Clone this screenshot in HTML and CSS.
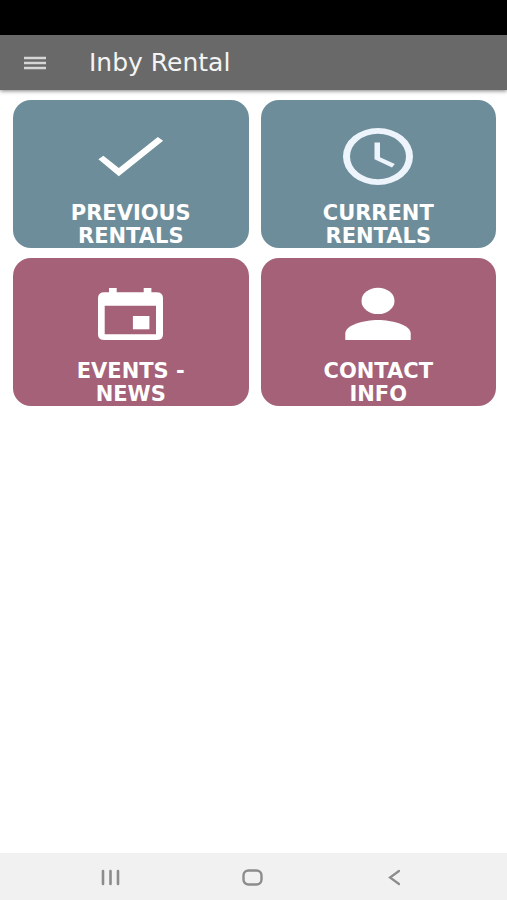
FILE: index.html
```html
<!DOCTYPE html>
<html lang="en">
<head>
    <meta charset="UTF-8">
    <meta name="viewport" content="width=device-width, initial-scale=1.0">
    <title>Inby Rental</title>
    <link rel="stylesheet" href="styles.css">
</head>
<body>
    <div class="status-bar"></div>

    <header class="toolbar">
        <button class="menu-button" type="button" aria-label="Menu">
            <svg width="24" height="14" viewBox="0 0 24 14">
                <path d="M1 2h22M1 7h22M1 12h22" stroke="#d6d6d6" stroke-width="2.4"/>
            </svg>
        </button>
        <h1>Inby Rental</h1>
    </header>

    <main class="tiles">
        <a class="tile blue" href="#previous">
            <svg class="tile-icon" viewBox="0 0 80 64">
                <path d="M7.4 35.3L12.4 31.7L27.8 44L66.8 13L72.1 16.7L27.8 52.3Z"/>
            </svg>
            <span>PREVIOUS RENTALS</span>
        </a>
        <a class="tile blue" href="#current">
            <svg class="tile-icon clock" viewBox="0 0 80 64">
                <path fill-rule="evenodd" d="M5 32.5a35 28.5 0 1 0 70 0a35 28.5 0 1 0 -70 0ZM12 32.5a28 22.7 0 1 1 56 0a28 22.7 0 1 1 -56 0Z"/>
                <path d="M36.5 18.5H42V33.3L56.8 40L54 43.6L36.5 35.3Z"/>
            </svg>
            <span>CURRENT RENTALS</span>
        </a>
        <a class="tile plum" href="#events">
            <svg class="tile-icon" viewBox="0 0 80 64">
                <path fill-rule="evenodd" d="M18 6H25.7V10.3H52.7V6H60.4V10.3H65.2Q72 10.3 72 16V52.5Q72 58 65.2 58H13.7Q7 58 7 52.5V16Q7 10.3 13.7 10.3H18ZM13.7 23.7V52.3H65V23.7Z"/>
                <path d="M41.9 34H58.4V47.3H41.9Z"/>
            </svg>
            <span>EVENTS - NEWS</span>
        </a>
        <a class="tile plum" href="#contact">
            <svg class="tile-icon" viewBox="0 0 80 64">
                <ellipse cx="40" cy="18.9" rx="16.5" ry="13.2"/>
                <path d="M7.3 58V51.5C7.3 43 26 38 40 38S72.7 43 72.7 51.5V58Z"/>
            </svg>
            <span>CONTACT INFO</span>
        </a>
    </main>

    <nav class="nav-bar" aria-label="System">
        <button type="button" aria-label="Recent apps">
            <svg width="24" height="20" viewBox="0 0 24 20">
                <path d="M3 4v13M10.5 4v13M18 4v13" stroke-width="2.6"/>
            </svg>
        </button>
        <button type="button" aria-label="Home">
            <svg width="24" height="20" viewBox="0 0 24 20">
                <rect x="1.5" y="3.5" width="18" height="14" rx="5" stroke-width="2.4"/>
            </svg>
        </button>
        <button type="button" aria-label="Back">
            <svg width="24" height="20" viewBox="0 0 24 20">
                <path d="M15 4L6 10.5L15 17" stroke-width="2.2"/>
            </svg>
        </button>
    </nav>
</body>
</html>
```

FILE: styles.css
```css
* {
    box-sizing: border-box;
}
body {
    display: flex;
    flex-direction: column;
    min-height: 100vh;
    margin: 0;
    background-color: #fff;
    font-family: "DejaVu Sans", Verdana, sans-serif;
}
button {
    display: flex;
    padding: 0;
    border: none;
    background: none;
    cursor: pointer;
}
.status-bar {
    height: 35px;
    background-color: #000;
}
.toolbar {
    display: flex;
    align-items: center;
    gap: 42px;
    height: 55px;
    padding: 0 23px;
    background-color: #696969;
    box-shadow: 0 1px 4px rgba(0, 0, 0, 0.5);
}
.toolbar h1 {
    margin: 0;
    color: #f4f4f4;
    font-size: 25px;
    font-weight: 400;
    line-height: 28px;
}
.tiles {
    display: grid;
    grid-template-columns: 1fr 1fr;
    gap: 10px 12px;
    padding: 10px 11px 10px 13px;
}
.tile {
    display: flex;
    flex-direction: column;
    align-items: center;
    gap: 14px;
    padding: 24px 48px 0;
    border-radius: 18px;
    color: #fff;
    font-size: 21px;
    font-weight: 700;
    line-height: 23px;
    text-align: center;
    text-decoration: none;
}
.blue {
    background-color: #6d8d9a;
}
.plum {
    background-color: #a46177;
}
.tile-icon {
    width: 80px;
    height: 64px;
    fill: #fff;
}
.clock {
    fill: #edf4fb;
}
.nav-bar {
    display: flex;
    align-items: center;
    justify-content: center;
    gap: 118px;
    height: 47px;
    margin-top: auto;
    background-color: #f1f1f1;
}
.nav-bar svg {
    fill: none;
    stroke: #8c8c8c;
    stroke-linecap: round;
}
```
